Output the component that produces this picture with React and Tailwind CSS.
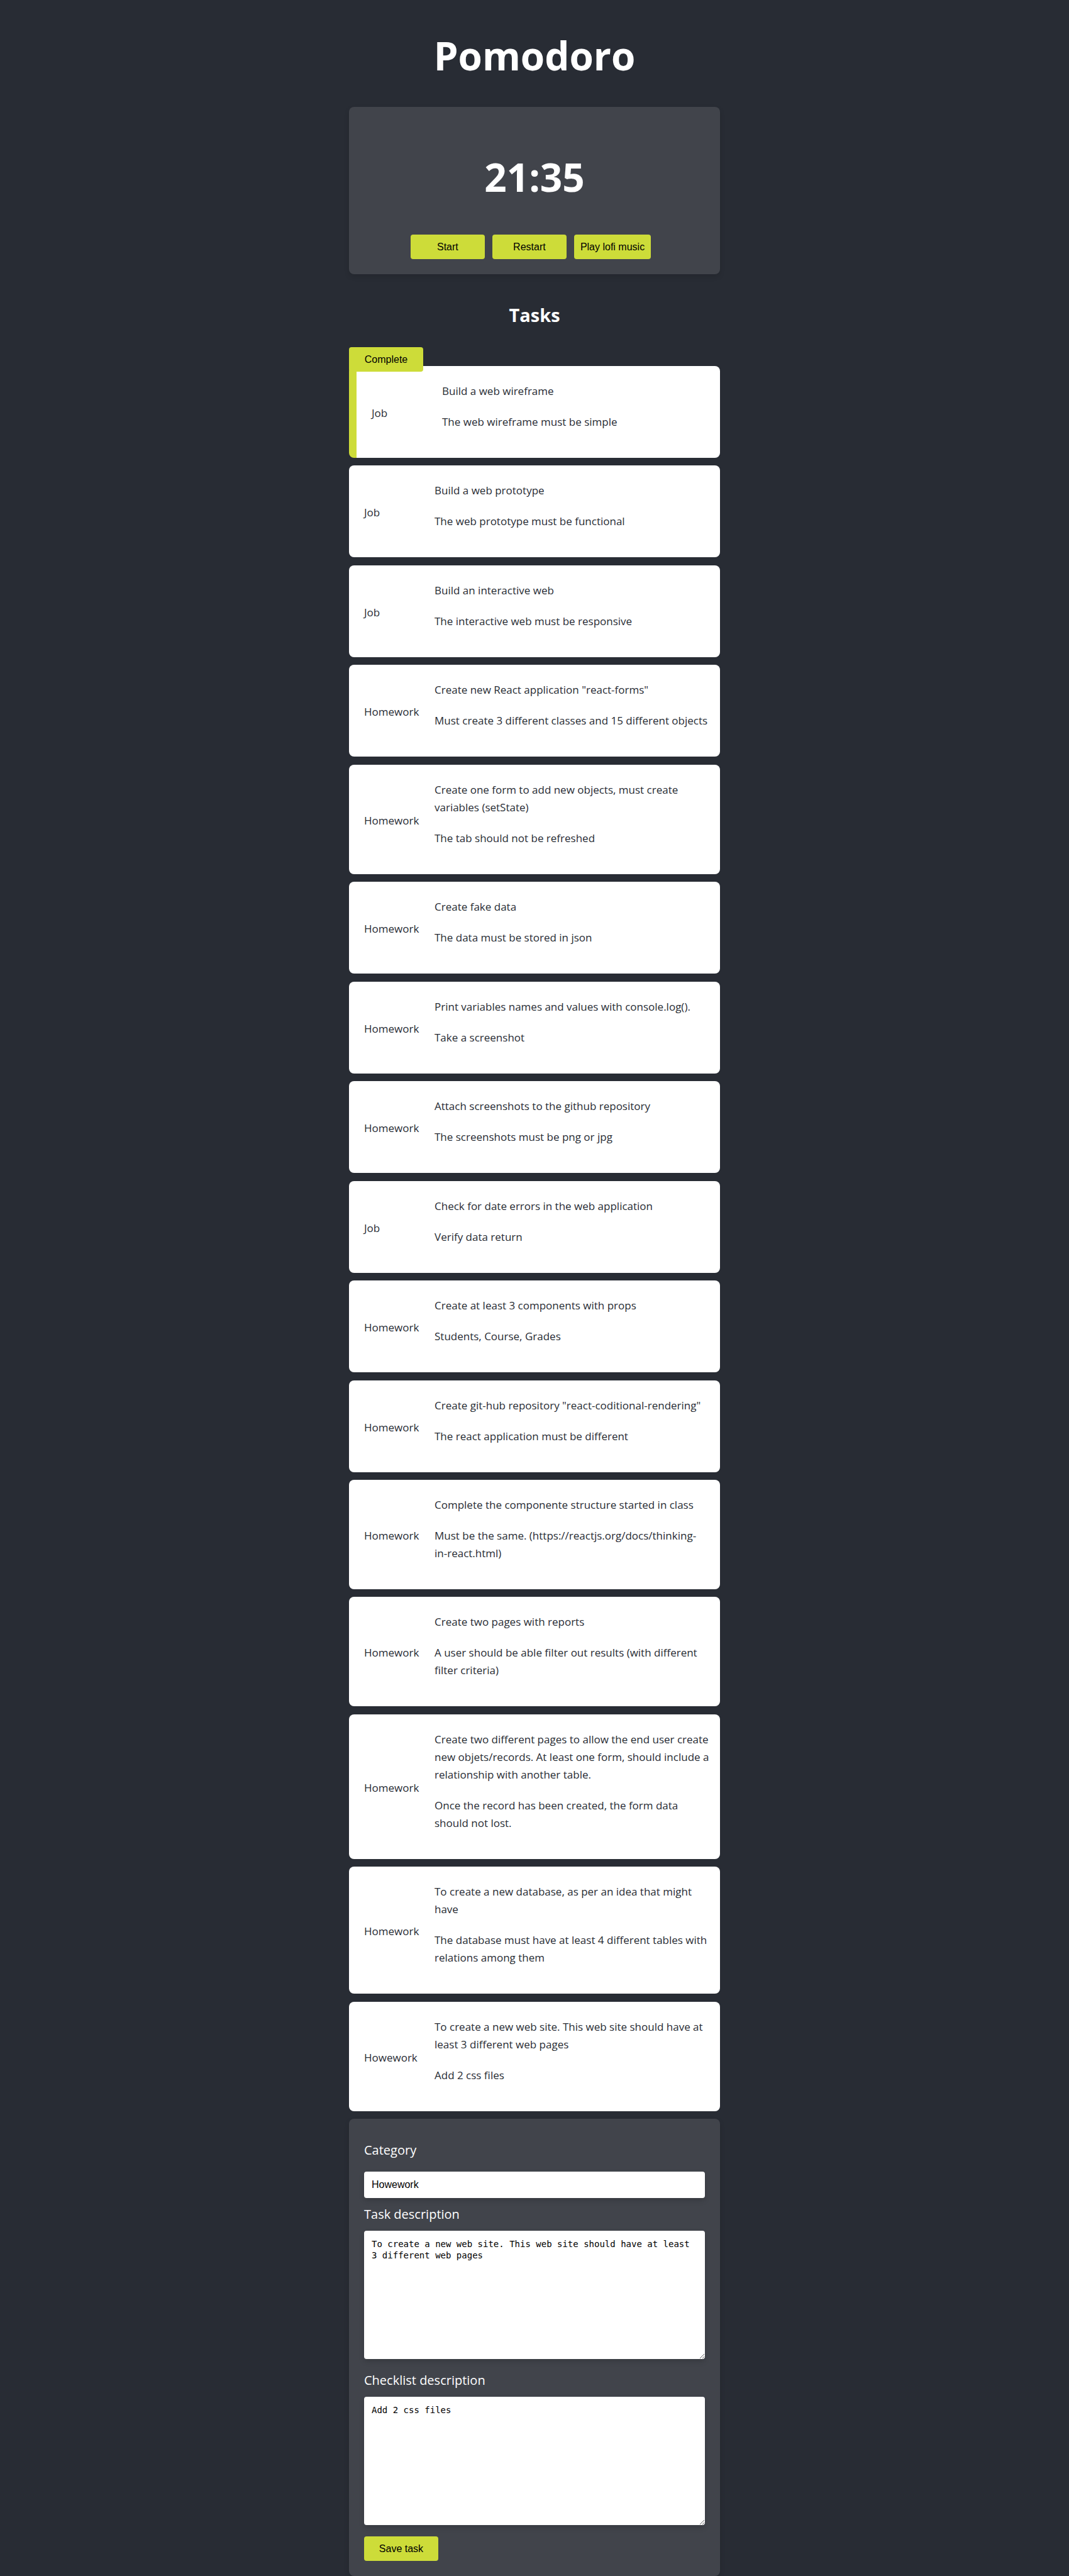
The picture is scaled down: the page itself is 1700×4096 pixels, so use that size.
import React, { useState } from "react";

const TASKS = [
  ["Job", "Build a web wireframe", "The web wireframe must be simple"],
  ["Job", "Build a web prototype", "The web prototype must be functional"],
  ["Job", "Build an interactive web", "The interactive web must be responsive"],
  ["Homework", 'Create new React application "react-forms"', "Must create 3 different classes and 15 different objects"],
  ["Homework", "Create one form to add new objects, must create variables (setState)", "The tab should not be refreshed"],
  ["Homework", "Create fake data", "The data must be stored in json"],
  ["Homework", "Print variables names and values with console.log().", "Take a screenshot"],
  ["Homework", "Attach screenshots to the github repository", "The screenshots must be png or jpg"],
  ["Job", "Check for date errors in the web application", "Verify data return"],
  ["Homework", "Create at least 3 components with props", "Students, Course, Grades"],
  ["Homework", 'Create git-hub repository "react-coditional-rendering"', "The react application must be different"],
  [
    "Homework",
    "Complete the componente structure started in class",
    <>Must be the same. (https://reactjs.org/docs/thinking-<span className="whitespace-nowrap">in-react.html)</span></>,
  ],
  ["Homework", "Create two pages with reports", "A user should be able filter out results (with different filter criteria)"],
  ["Homework", "Create two different pages to allow the end user create new objets/records. At least one form, should include a relationship with another table.", "Once the record has been created, the form data should not lost."],
  ["Homework", "To create a new database, as per an idea that might have", "The database must have at least 4 different tables with relations among them"],
  ["Howework", "To create a new web site. This web site should have at least 3 different web pages", "Add 2 css files"],
];

function Button({ children, className = "" }) {
  return (
    <button
      type="button"
      className={`h-[39px] min-w-[118px] cursor-pointer rounded bg-[#cddc39] px-[10px] font-['Liberation_Sans',Arial,sans-serif] text-base leading-5 whitespace-nowrap text-black ${className}`}
    >
      {children}
    </button>
  );
}

function Timer() {
  return (
    <section className="rounded-lg bg-[#41444b] px-6 pt-[71px] pb-6 text-center shadow-[0_4px_8px_rgba(0,0,0,0.12)]">
      <p className="text-[62px] leading-[80px] font-bold">21:35</p>
      <div className="mt-[52px] flex justify-center gap-3 pr-3">
        <Button>Start</Button>
        <Button>Restart</Button>
        <Button>Play lofi music</Button>
      </div>
    </section>
  );
}

function Task({ category, title, detail, selected }) {
  return (
    <li
      className={`relative grid grid-cols-[112px_1fr] items-center rounded-lg bg-white pt-[26px] pr-3 pb-[22px] pl-6 text-[17px] leading-7 text-[#282c34] ${
        selected ? "border-l-12 border-[#cddc39]" : ""
      }`}
    >
      {selected && <Button className="absolute -top-[30px] -left-3">Complete</Button>}
      <span>{category}</span>
      <div>
        <p className="mb-[21px]">{title}</p>
        <p className="mb-[21px]">{detail}</p>
      </div>
    </li>
  );
}

const LABEL = "block pt-2 text-xl leading-9";
const FIELD = "block w-full rounded bg-white px-3 text-black shadow-[0_4px_8px_rgba(0,0,0,0.15)] outline-none";
const AREA = "h-[204px] resize py-3 font-['DejaVu_Sans_Mono',monospace] text-sm leading-[18px]";

function TaskForm() {
  const [category, setCategory] = useState("Howework");
  const [description, setDescription] = useState(
    "To create a new web site. This web site should have at least 3 different web pages"
  );
  const [checklist, setChecklist] = useState("Add 2 css files");
  return (
    <form className="mt-3 rounded-lg bg-[#41444b] p-6 shadow-[0_4px_8px_rgba(0,0,0,0.12)]">
      <label htmlFor="category" className={`${LABEL} pb-4`}>Category</label>
      <input
        id="category"
        value={category}
        onChange={(e) => setCategory(e.target.value)}
        className={`${FIELD} h-[42px] font-['Liberation_Sans',Arial,sans-serif] text-base`}
      />
      <label htmlFor="description" className={`${LABEL} pb-2`}>Task description</label>
      <textarea
        id="description"
        value={description}
        onChange={(e) => setDescription(e.target.value)}
        className={`${FIELD} ${AREA}`}
      />
      <label htmlFor="checklist" className={`${LABEL} mt-2 pb-2`}>Checklist description</label>
      <textarea
        id="checklist"
        value={checklist}
        onChange={(e) => setChecklist(e.target.value)}
        className={`${FIELD} ${AREA}`}
      />
      <Button className="mt-[18px] block">Save task</Button>
    </form>
  );
}

export default function App() {
  return (
    <div className="min-h-screen bg-[#282c34] font-['Open_Sans','Segoe_UI',sans-serif] text-white">
      <main className="mx-auto flex min-h-screen w-full max-w-[590px] flex-col pt-12">
        <h1 className="mb-[42px] text-center text-[62px] leading-[80px] font-bold">Pomodoro</h1>
        <Timer />
        <h2 className="mt-[45px] mb-[61px] text-center text-[29px] leading-10 font-bold">Tasks</h2>
        <ul className="flex flex-1 flex-col justify-between gap-3">
          {TASKS.map(([category, title, detail], i) => (
            <Task key={title} category={category} title={title} detail={detail} selected={i === 0} />
          ))}
        </ul>
        <TaskForm />
      </main>
    </div>
  );
}
